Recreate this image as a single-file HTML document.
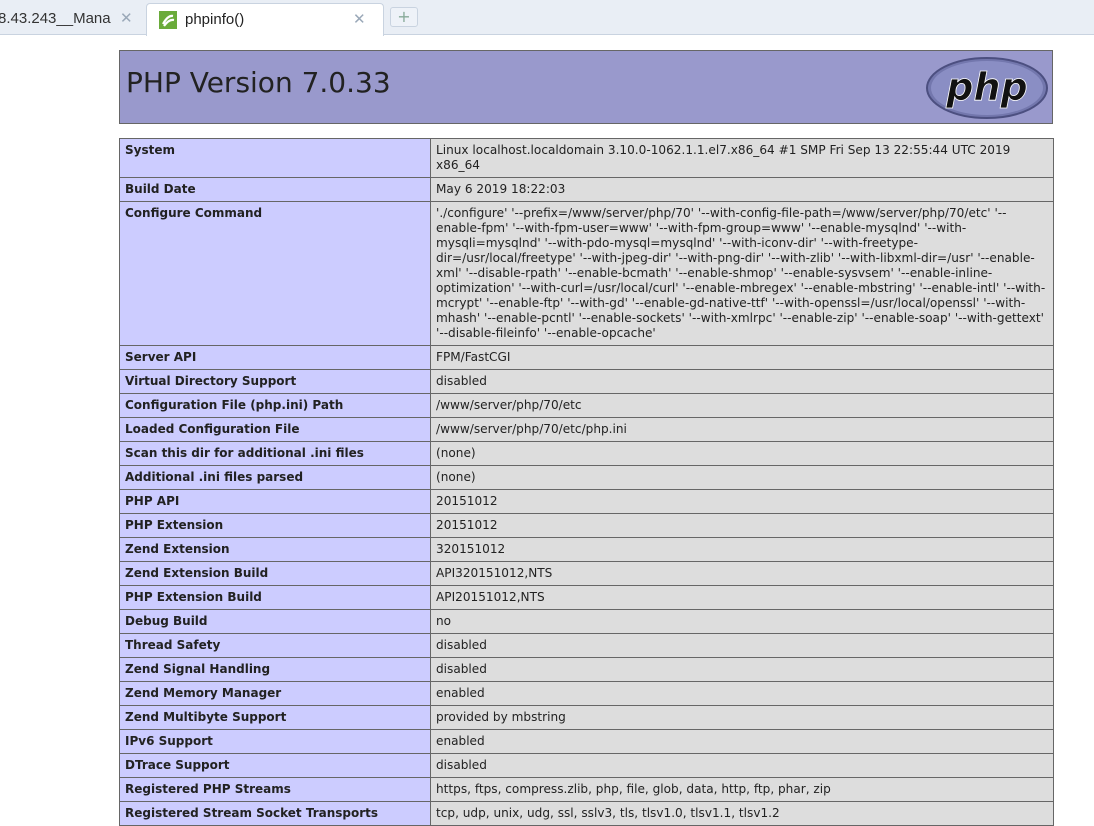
<!DOCTYPE html>
<html><head><meta charset="utf-8"><style>
body{margin:0;background:#fff;width:1094px;height:824px;overflow:hidden;font-family:"DejaVu Sans",Verdana,sans-serif;}
.tabs{position:absolute;left:0;top:0;width:1094px;height:34px;background:#e9eef5;border-bottom:1px solid #c9d3e0;}
.tab1{position:absolute;left:-2px;top:4px;width:142px;height:30px;font:15px "Liberation Sans",sans-serif;color:#333;line-height:30px;white-space:nowrap;}
.tab2{position:absolute;left:146px;top:3px;width:236px;height:32px;background:#fff;border:1px solid #c9d3e0;border-bottom:none;border-radius:4px 4px 0 0;font:15px "Liberation Sans",sans-serif;color:#222;line-height:32px;}
.plus{position:absolute;left:390px;top:7px;width:26px;height:18px;border:1px solid #c9d3e0;border-radius:3px;background:#eef2f8;color:#8a9;text-align:center;line-height:17px;font-size:16px;}
.x{color:#9aa8b8;font-size:15px;position:absolute;}
.hdr{position:absolute;left:119px;top:50px;width:932px;height:72px;background:#9999cc;border:1px solid #666;}
.hdr h1{margin:0;position:absolute;left:6px;top:15px;font:normal 28px "DejaVu Sans",sans-serif;color:#222;}
table{position:absolute;left:119px;top:138px;width:934px;border-collapse:collapse;font-size:12.1px;table-layout:fixed;}
td{border:1px solid #666;padding:4px 5px;line-height:15px;vertical-align:top;color:#222;white-space:nowrap;overflow:hidden;}
td.e{background:#ccccff;font-weight:bold;color:#222;font-size:12px;}
td.v{background:#dddddd;}
</style></head><body>
<div class="tabs">
<div class="tab1">8.43.243__Mana<span class="x" style="left:122px;top:0">✕</span></div>
<div class="tab2"><svg style="position:absolute;left:12px;top:7px" width="18" height="18"><rect width="18" height="18" fill="#6aab3a"/><path d="M4 13 Q9 4 14 5 M5 15 Q10 8 15 9" stroke="#fff" stroke-width="2.2" fill="none"/></svg><span style="position:absolute;left:38px">phpinfo()</span><span class="x" style="left:206px;top:0">✕</span></div>
<div class="plus">+</div>
</div>
<div class="hdr"><h1>PHP Version 7.0.33</h1>
<svg style="position:absolute;left:805px;top:5px" width="124" height="64"><ellipse cx="62" cy="32" rx="60" ry="30" fill="#7377ad" stroke="#4c4f80" stroke-width="2"/><ellipse cx="62" cy="32" rx="56" ry="27" fill="#8a8ec4"/><text x="62" y="44" text-anchor="middle" font-family="DejaVu Sans" font-weight="bold" font-style="italic" font-size="38" fill="#111" stroke="#fff" stroke-width="0.8">php</text></svg>
</div>
<table>
<colgroup><col style="width:311px"><col style="width:623px"></colgroup>
<tr><td class="e">System</td><td class="v">Linux localhost.localdomain 3.10.0-1062.1.1.el7.x86_64 #1 SMP Fri Sep 13 22:55:44 UTC 2019<br>x86_64</td></tr>
<tr><td class="e">Build Date</td><td class="v">May 6 2019 18:22:03</td></tr>
<tr><td class="e">Configure Command</td><td class="v">'./configure' '--prefix=/www/server/php/70' '--with-config-file-path=/www/server/php/70/etc' '--<br>enable-fpm' '--with-fpm-user=www' '--with-fpm-group=www' '--enable-mysqlnd' '--with-<br>mysqli=mysqlnd' '--with-pdo-mysql=mysqlnd' '--with-iconv-dir' '--with-freetype-<br>dir=/usr/local/freetype' '--with-jpeg-dir' '--with-png-dir' '--with-zlib' '--with-libxml-dir=/usr' '--enable-<br>xml' '--disable-rpath' '--enable-bcmath' '--enable-shmop' '--enable-sysvsem' '--enable-inline-<br>optimization' '--with-curl=/usr/local/curl' '--enable-mbregex' '--enable-mbstring' '--enable-intl' '--with-<br>mcrypt' '--enable-ftp' '--with-gd' '--enable-gd-native-ttf' '--with-openssl=/usr/local/openssl' '--with-<br>mhash' '--enable-pcntl' '--enable-sockets' '--with-xmlrpc' '--enable-zip' '--enable-soap' '--with-gettext'<br>'--disable-fileinfo' '--enable-opcache'</td></tr>
<tr><td class="e">Server API</td><td class="v">FPM/FastCGI</td></tr>
<tr><td class="e">Virtual Directory Support</td><td class="v">disabled</td></tr>
<tr><td class="e">Configuration File (php.ini) Path</td><td class="v">/www/server/php/70/etc</td></tr>
<tr><td class="e">Loaded Configuration File</td><td class="v">/www/server/php/70/etc/php.ini</td></tr>
<tr><td class="e">Scan this dir for additional .ini files</td><td class="v">(none)</td></tr>
<tr><td class="e">Additional .ini files parsed</td><td class="v">(none)</td></tr>
<tr><td class="e">PHP API</td><td class="v">20151012</td></tr>
<tr><td class="e">PHP Extension</td><td class="v">20151012</td></tr>
<tr><td class="e">Zend Extension</td><td class="v">320151012</td></tr>
<tr><td class="e">Zend Extension Build</td><td class="v">API320151012,NTS</td></tr>
<tr><td class="e">PHP Extension Build</td><td class="v">API20151012,NTS</td></tr>
<tr><td class="e">Debug Build</td><td class="v">no</td></tr>
<tr><td class="e">Thread Safety</td><td class="v">disabled</td></tr>
<tr><td class="e">Zend Signal Handling</td><td class="v">disabled</td></tr>
<tr><td class="e">Zend Memory Manager</td><td class="v">enabled</td></tr>
<tr><td class="e">Zend Multibyte Support</td><td class="v">provided by mbstring</td></tr>
<tr><td class="e">IPv6 Support</td><td class="v">enabled</td></tr>
<tr><td class="e">DTrace Support</td><td class="v">disabled</td></tr>
<tr><td class="e">Registered PHP Streams</td><td class="v">https, ftps, compress.zlib, php, file, glob, data, http, ftp, phar, zip</td></tr>
<tr><td class="e">Registered Stream Socket Transports</td><td class="v">tcp, udp, unix, udg, ssl, sslv3, tls, tlsv1.0, tlsv1.1, tlsv1.2</td></tr>
</table>
</body></html>
